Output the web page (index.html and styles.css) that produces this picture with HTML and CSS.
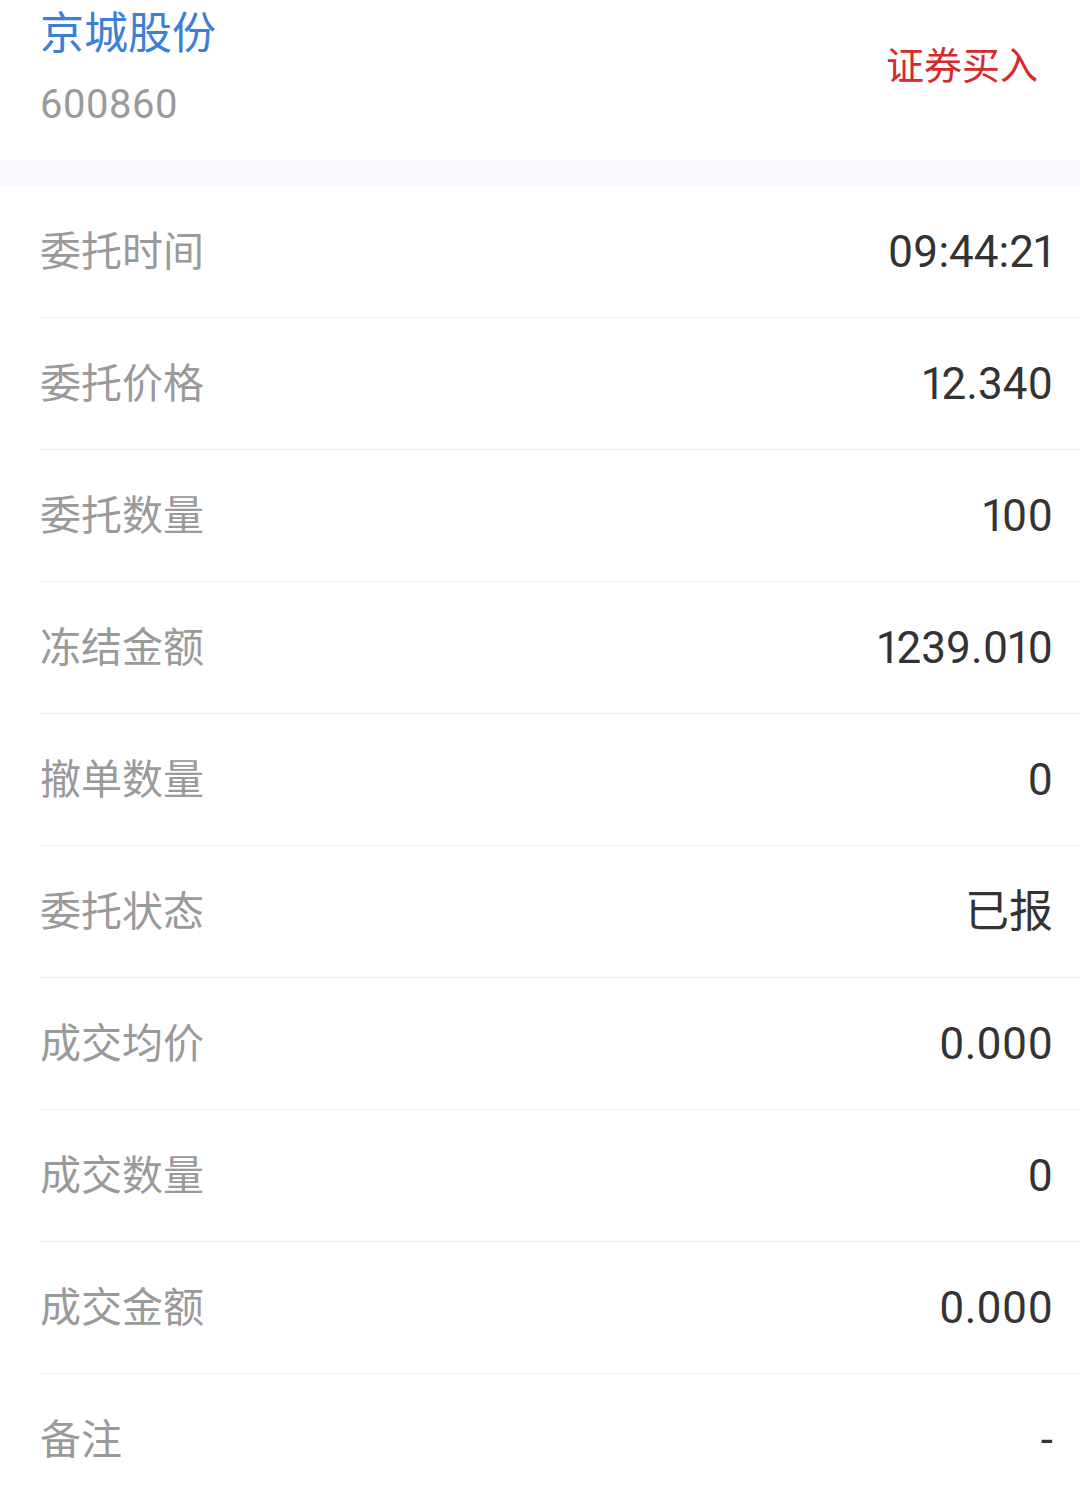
FILE: index.html
```html
<!DOCTYPE html>
<html lang="zh-CN">
<head>
<meta charset="utf-8">
<title>委托详情</title>
<link rel="stylesheet" href="styles.css">
</head>
<body>
<div class="header">
  <div class="stock">
    <div class="stock-name">京城股份</div>
    <div class="stock-code">600860</div>
  </div>
  <div class="trade-type">证券买入</div>
</div>
<div class="band"></div>
<div class="list">
  <div class="row"><span class="label">委托时间</span><span class="value">09:44:21</span></div>
  <div class="row"><span class="label">委托价格</span><span class="value">12.340</span></div>
  <div class="row"><span class="label">委托数量</span><span class="value">100</span></div>
  <div class="row"><span class="label">冻结金额</span><span class="value">1239.010</span></div>
  <div class="row"><span class="label">撤单数量</span><span class="value">0</span></div>
  <div class="row"><span class="label">委托状态</span><span class="value">已报</span></div>
  <div class="row"><span class="label">成交均价</span><span class="value">0.000</span></div>
  <div class="row"><span class="label">成交数量</span><span class="value">0</span></div>
  <div class="row"><span class="label">成交金额</span><span class="value">0.000</span></div>
  <div class="row last"><span class="label">备注</span><span class="value">-</span></div>
</div>
</body>
</html>
```
FILE: styles.css
```css
html, body {
  margin: 0;
  padding: 0;
  background: #ffffff;
  font-family: Roboto, "Noto Sans CJK SC", sans-serif;
}

.header {
  height: 160px;
  box-sizing: border-box;
  padding: 2px 42px 0 40px;
  display: flex;
  justify-content: space-between;
  align-items: flex-start;
}

.stock {
  display: flex;
  flex-direction: column;
}

.stock-name {
  font-size: 44px;
  line-height: 64px;
  color: #3a80d8;
}

.stock-code {
  margin-top: 7px;
  font-size: 40px;
  line-height: 64px;
  color: #9a9a9a;
  letter-spacing: 0.5px;
}

.trade-type {
  margin-top: 39px;
  font-size: 38px;
  line-height: 50px;
  color: #d8272d;
}

.band {
  height: 26px;
  background: #f7f9fd;
}

.list {
  padding-left: 40px;
}

.row {
  height: 132px;
  box-sizing: border-box;
  border-bottom: 1px solid #eeeeee;
  padding-right: 27px;
  display: flex;
  justify-content: space-between;
  align-items: center;
}

.row.last {
  border-bottom: none;
}

.label {
  font-size: 41px;
  line-height: 56px;
  margin-bottom: 0;
  color: #9a9a9a;
}

.value {
  font-size: 44px;
  line-height: 56px;
  color: #333333;
  font-variant-numeric: proportional-nums;
}
```
